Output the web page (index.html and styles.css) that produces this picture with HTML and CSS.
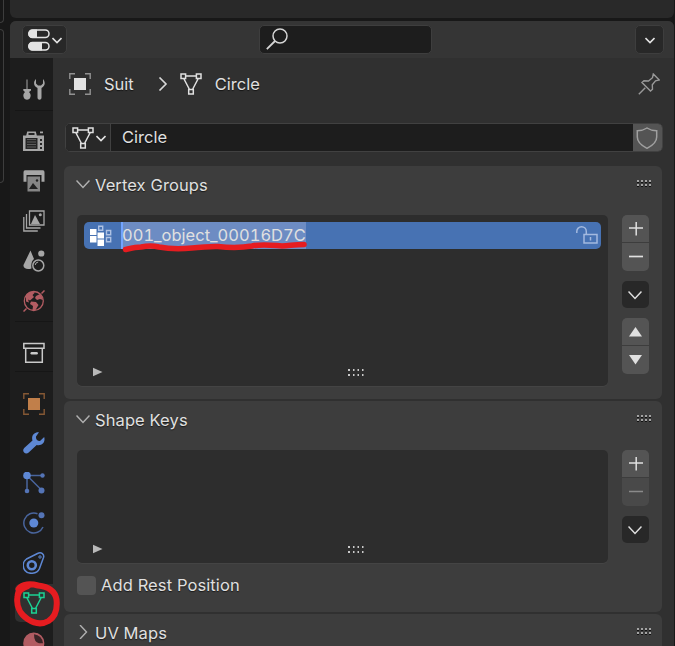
FILE: index.html
```html
<!DOCTYPE html>
<html lang="en">
<head>
<meta charset="utf-8">
<title>Properties</title>
<link rel="stylesheet" href="styles.css">
</head>
<body>
<svg class="defs" width="0" height="0">
  <symbol id="mesh" viewBox="0 0 22 22"><path d="M5.5 3H16.5M4 6l5.5 10.5M18 6l-5.500 10.500M1 1h4.600v4.600H1zM16.400 1H21v4.600h-4.600zM8.700 16.400h4.600V21H8.700z" fill="none" stroke="currentColor" stroke-width="1.500"/></symbol>
  <symbol id="down" viewBox="0 0 14 14"><path d="M.5 3.500L7 10.500l6.500-7" fill="none" stroke="currentColor" stroke-width="1.500"/></symbol>
  <symbol id="small" viewBox="0 0 10 10"><path d="M.5 3L5 7.500 9.500 3" fill="none" stroke="currentColor" stroke-width="1.600"/></symbol>
  <symbol id="plus" viewBox="0 0 14 14"><path d="M0 6h14M7.200 -.5v14" stroke="currentColor" stroke-width="1.500"/></symbol>
  <symbol id="minus" viewBox="0 0 14 14"><path d="M0 6.500h14" stroke="currentColor" stroke-width="1.700"/></symbol>
  <symbol id="play" viewBox="0 0 10 10"><path d="M0 .8l9.500 4.200L0 9.200z" fill="#b9b9b9"/></symbol>
  <symbol id="grip" viewBox="0 0 15 8"><path d="M0 2h2v1H0zM4 2h2v1H4zM8 2h2v1H8zM12 2h2v1h-2zM0 6h2v1H0zM4 6h2v1H4zM8 6h2v1H8zM12 6h2v1h-2z" fill="#111"/><path d="M0 0h2v2H0zM4 0h2v2H4zM8 0h2v2H8zM12 0h2v2h-2zM0 4h2v2H0zM4 4h2v2H4zM8 4h2v2H8zM12 4h2v2h-2z" fill="#a3a3a3"/></symbol>
  <symbol id="resize" viewBox="0 0 16 8"><path d="M0 0h2v2H0zM5 0h1.500v2H5zM9.500 0H11v2H9.500zM14 0h1.500v2H14zM0 5h2v2H0zM5 5h1.500v2H5zM9.500 5H11v2H9.500zM14 5h1.500v2H14z" fill="#c9c9c9"/></symbol>
</svg>
<div class="screen">
  <div class="gutter"><div class="side side-top"></div><div class="side side-low"></div></div>
  <div class="main">
    <div class="upper"></div>
    <div class="editor">
      <header class="header">
        <button class="btn type"><svg width="22" height="22" viewBox="0 0 22 22"><rect x=".8" y="1" width="20.200" height="7.500" rx="3.700" fill="none" stroke="#e3e3e3" stroke-width="1.500"/><path d="M9 .500H4.500a4.200 4.200 0 0 0 0 8.500H9zM14 13H4.500a4.200 4.200 0 0 0 0 8.500H14z" fill="#e3e3e3"/><rect x=".8" y="13.500" width="20.200" height="7.500" rx="3.700" fill="none" stroke="#e3e3e3" stroke-width="1.500"/></svg><svg width="10" height="10"><use href="#small"/></svg></button>
        <div class="search"><svg width="22" height="22" viewBox="0 0 22 22"><circle cx="14" cy="8" r="7" fill="none" stroke="#d5d5d5" stroke-width="1.500"/><path d="M9 13L.8 21.200" stroke="#d5d5d5" stroke-width="1.800"/></svg></div>
        <button class="btn options"><svg width="10" height="10"><use href="#small"/></svg></button>
      </header>
      <div class="body">
        <nav class="tabs">
          <div class="tab tool"><svg width="22" height="22" viewBox="0 0 22 22" fill="#a6a6a6"><path d="M3.500 1.500h1V11h3.500v1.500L6 14c2 2 2 4 1 6-1 2.300-5 2.300-6 0-1-2-1-4 1-6L.3 12.500V11h3.200z"/><path d="M13 1c-3 3-2.500 7 1.500 9v9.500c0 3 4 3 4 0V10c4-2 4-6 1.500-9v4.500l-2 2h-3l-2-2z"/></svg></div>
          <div class="tab render"><svg width="22" height="22" viewBox="0 0 22 22"><path d="M0 5.500h3.200l1-4h8.600l1 4H21V21H0zM17 1.500h3V3.200h-3z" fill="#a6a6a6"/><path d="M5.500 3h6v2h-6zM2.500 8h12v11h-12zM17 9h2v2h-2zM17 13h2v2h-2zM17 17h2v2h-2z" fill="#252525"/><path d="M4 9.500h9M4 12h9M4 14.500h9M4 17h9" stroke="#5c5c5c"/></svg></div>
          <div class="tab"><svg width="22" height="22" viewBox="0 0 22 22"><path d="M2 .3h18q1.500 0 1.500 2v9.500h-3V5H3.500v6.800h-3V2.300Q.5.300 2 .3z" fill="#a6a6a6"/><path d="M4.500 6.500H17V21.500H4.500z" fill="#858585"/><path d="M6 19l4-6 5 6z" fill="#202020"/><circle cx="14" cy="10.500" r="1.200" fill="#202020"/></svg></div>
          <div class="tab"><svg width="22" height="22" viewBox="0 0 22 22" fill="none" stroke="#a6a6a6" stroke-width="1.300"><path d="M6.500 1H21v14H6.500zM3.500 4v14h14M.8 7v14h14"/><path d="M8 14l4-9 5 9z" fill="#a6a6a6" stroke="none"/><circle cx="17.300" cy="4.800" r="1.500" fill="#a6a6a6" stroke="none"/></svg></div>
          <div class="tab"><svg width="22" height="22" viewBox="0 0 22 22" fill="#a6a6a6"><path d="M7.500.500L11 9q-3.500 3-2.500 9.500C4 20 0 18.500.500 15z"/><circle cx="18.300" cy="3.500" r="3.100"/><circle cx="15.300" cy="15.500" r="5.500" fill="none" stroke="#a6a6a6" stroke-width="1.500"/><path d="M12.200 15q.2-2.600 3-3" fill="none" stroke="#a6a6a6"/></svg></div>
          <div class="tab"><svg width="22" height="22" viewBox="0 0 22 22"><circle cx="10.800" cy="11" r="9.500" fill="none" stroke="#b25c62" stroke-width="1.300"/><path d="M.5 21.500l3-3M18.500 3.500l3-3" stroke="#b25c62" stroke-width="1.500"/><path d="M3 5q4-5 9-2.500L9.500 5l1.500 2-4 3.500-2-1 1 3-3-1zM13 6l4-2q3 3 3 6l-3-1-3 1-2-2zM8 11.500l5 .5 2.500 3-3 5H9.500l.5-4-3-2z" fill="#b25c62"/></svg></div>
          <div class="tab collection"><svg width="22" height="22" viewBox="0 0 22 22" fill="none" stroke="#c9c9c9" stroke-width="1.500"><path d="M.8 1.500H21v4.700H.8zM2.700 6v14.300h16.600V6"/><path d="M8.700 11.200h5" stroke-width="2.400" stroke-linecap="round"/></svg></div>
          <div class="tab object"><svg width="22" height="22" viewBox="0 0 22 22"><path d="M.8 6V.8H6M16 .8h5.200V6M.8 16v5.200H6M16 21.200h5.200V16" fill="none" stroke="#855834" stroke-width="1.400"/><path d="M5 5h12v12H5z" fill="#c17f4a"/></svg></div>
          <div class="tab"><svg width="22" height="22" viewBox="0 0 22 22"><path d="M16 .3C11 0 8 4 9.500 8.500L1.200 16c-3 3.200 1.300 7.500 4.500 4.500l8-7.500c5 1.300 9-2.500 7.500-8L17 9q-4.500 0-4-4.500z" fill="#5e88d4"/></svg></div>
          <div class="tab"><svg width="22" height="22" viewBox="0 0 22 22"><path d="M4 3.500h15M4 3.500V19M4 3.500l15 15" fill="none" stroke="#49659d" stroke-width="1.500"/><circle cx="4" cy="3.500" r="3.800" fill="#5e88d4"/><g fill="#5474b6"><circle cx="19.500" cy="3.500" r="2.200"/><circle cx="4" cy="19" r="2.300"/><circle cx="18.500" cy="18.500" r="3"/></g></svg></div>
          <div class="tab"><svg width="22" height="22" viewBox="0 0 22 22"><path d="M14.500 1.700A10 10 0 1 0 20 15" fill="none" stroke="#49659d" stroke-width="1.500"/><circle cx="10.800" cy="11" r="4.500" fill="#5e88d4"/><circle cx="18.500" cy="3.300" r="3" fill="#5474b6"/></svg></div>
          <div class="tab"><svg width="22" height="22" viewBox="0 0 22 22" fill="none" stroke="#5e88d4"><path d="M3.500 7L14.500 1.500c4-2 7 1 6 4L16.500 16.500C14 22.500 5 22.500 2 18.500S0 9.500 3.500 7z" stroke-width="1.500"/><circle cx="8.800" cy="13.200" r="4" stroke-width="2.600"/><circle cx="17" cy="5" r="1.200"/></svg></div>
          <div class="tab active"><svg width="22" height="22"><use href="#mesh"/></svg></div>
          <div class="tab"><svg width="22" height="22" viewBox="0 0 22 22"><circle cx="10.800" cy="11" r="9.900" fill="#b25c62" stroke="#b25c62" stroke-width="1.300"/><path d="M11 2.200q8 1 9 9h-4q-5-1-5-9z" fill="#3a2426"/></svg></div>
        </nav>
        <main class="content">
          <div class="crumbs">
            <svg width="22" height="22" viewBox="0 0 22 22"><path d="M.8 6V.8H6M16 .8h5.200V6M.8 16v5.200H6M16 21.200h5.200V16" fill="none" stroke="#929292" stroke-width="1.400"/><path d="M5 5h12v12H5z" fill="#e3e3e3"/></svg>
            <span class="suit">Suit</span>
            <svg class="arrow" width="10" height="14" viewBox="0 0 10 14"><path d="M1.500.5L8 7l-6.500 6.500" fill="none" stroke="#d8d8d8" stroke-width="1.600"/></svg>
            <svg class="mesh" width="22" height="22"><use href="#mesh"/></svg>
            <span>Circle</span>
            <svg class="pin" width="22" height="22" viewBox="0 0 22 22"><path d="M.8 21.200l6.500-6.500M15.300 1l6 6-3.800.8-3.200 4 .2 4.500L12.500 18 4 9.500 6 7.800l4.500.2 4-3.300z" fill="none" stroke="#999" stroke-width="1.400"/></svg>
          </div>
          <div class="name">
            <div class="pick"><svg width="22" height="22"><use href="#mesh"/></svg><svg width="10" height="10"><use href="#small"/></svg></div>
            <div class="value">Circle</div>
            <div class="shield"><svg width="22" height="22" viewBox="0 0 22 22"><path d="M11 1Q7 3.700 1.300 3.700V10q0 6.500 9.700 11.300 9.700-4.800 9.700-11.300V3.700Q15 3.700 11 1z" fill="none" stroke="#a0a0a0" stroke-width="1.500"/></svg></div>
          </div>
          <section class="panel groups">
            <div class="title"><svg width="14" height="14"><use href="#down"/></svg><h2>Vertex Groups</h2><svg class="grip" width="15" height="8"><use href="#grip"/></svg></div>
            <div class="columns">
              <div class="list">
                <div class="row">
                  <svg width="22" height="22" viewBox="0 0 22 22"><path d="M0 4h6.500v6H0zM0 11h6.500v6.500H0zM7.500 7.500h6.500v6H7.500zM7.500 14.500h6.500V21H7.500z" fill="#fff"/><path d="M8.700 1.200h4v4h-4zM16.500 5.500h4.200v4.300h-4.200zM16.500 12.500h4.200v4.300h-4.200z" fill="none" stroke="#adc1e3" stroke-width="1.400"/></svg>
                  <span class="edit">001_object_00016D7C</span>
                  <svg class="lock" width="22" height="18" viewBox="0 0 22 18"><path d="M.8 7V5.500a4.600 4.600 0 0 1 9.500 0V8M8 8.500h13V17H8zM14.500 11v3.500" fill="none" stroke="#a3b9df" stroke-width="1.500"/></svg>
                </div>
                <div class="foot"><svg width="10" height="10"><use href="#play"/></svg><svg class="resize" width="16" height="8"><use href="#resize"/></svg></div>
              </div>
              <div class="actions">
                <div class="pair"><button><svg width="14" height="14"><use href="#plus"/></svg></button><button><svg width="14" height="14"><use href="#minus"/></svg></button></div>
                <button class="menu"><svg width="14" height="14"><use href="#down"/></svg></button>
                <div class="pair"><button><svg width="14" height="10" viewBox="0 0 14 10"><path d="M6.500 0L13 9.500H0z" fill="#e0e0e0"/></svg></button><button><svg width="14" height="10" viewBox="0 0 14 10"><path d="M6.500 9.500L0 0h13z" fill="#e0e0e0"/></svg></button></div>
              </div>
            </div>
            <svg class="underline" width="190" height="16" viewBox="0 0 190 16"><path d="M7.500 10.500C14 9 18 8 23 8c7-1.500 12-1.500 18 0 12 2.300 22 2 33 1 12-.5 18-2 26-1.500 14 1.500 22 1.500 34-.5 11-2.500 22-.5 30 0 8-.3 12-1.500 22-1.500" fill="none" stroke="#e61c20" stroke-width="5.500" stroke-linecap="round"/></svg>
          </section>
          <section class="panel keys">
            <div class="title"><svg width="14" height="14"><use href="#down"/></svg><h2>Shape Keys</h2><svg class="grip" width="15" height="8"><use href="#grip"/></svg></div>
            <div class="columns">
              <div class="list"><div class="foot"><svg width="10" height="10"><use href="#play"/></svg><svg class="resize" width="16" height="8"><use href="#resize"/></svg></div></div>
              <div class="actions">
                <div class="pair"><button><svg width="14" height="14"><use href="#plus"/></svg></button><button class="off"><svg width="14" height="14"><use href="#minus"/></svg></button></div>
                <button class="menu"><svg width="14" height="14"><use href="#down"/></svg></button>
              </div>
            </div>
            <label class="check"><span class="box"></span><span>Add Rest Position</span></label>
          </section>
          <section class="panel uv">
            <div class="title"><svg width="14" height="14" viewBox="0 0 14 14"><path d="M4 0l6.500 7L4 14" fill="none" stroke="currentColor" stroke-width="1.400"/></svg><h2>UV Maps</h2><svg class="grip" width="15" height="8"><use href="#grip"/></svg></div>
          </section>
        </main>
      </div>
    </div>
  </div>
  <svg class="ring" width="48" height="48" viewBox="0 0 48 48"><path d="M4.500 9C8 3.500 17 3.500 24 5.500c9 1 17 5 18.500 14 1 9-1 17-8 21.500-7 4-15 2-21-2C6 34 2 26 3.500 17 3.500 12 7 8 14 6" fill="none" stroke="#e61c20" stroke-width="6" stroke-linecap="round" stroke-linejoin="round"/></svg>
</div>
</body>
</html>
```

FILE: styles.css
```css
* { box-sizing: border-box; }
body { margin: 0; background: #181818; color: #e0e0e0; font: 16.5px/20px Inter, sans-serif; text-shadow: 0 1px 1px #0009; }
svg { display: block; flex: none; }
.defs { position: absolute; }
button { margin: 0; padding: 0; border: 0; color: inherit; }
h2 { margin: 0; font-size: inherit; font-weight: 400; letter-spacing: .1px; }
.screen { position: relative; display: flex; width: 675px; height: 646px; overflow: hidden; }
.gutter { width: 10px; flex: none; }
.side { width: 4px; border: 1px solid #3d3d3d; border-left: 0; }
.side-top { height: 23px; border-top: 0; border-radius: 0 0 5px 0; }
.side-low { height: 154px; margin-top: 6px; border-radius: 0 5px 5px 0; }
.main { width: 664px; }
.upper { height: 18px; background: #292929; border-radius: 0 0 6px 6px; }
.editor { height: 625px; margin-top: 3px; background: #303030; border-radius: 6px 6px 0 0; overflow: hidden; }
.header { display: flex; height: 37px; padding: 4px 10px 0 12px; background: #353535; }
.btn, .search { display: flex; align-items: center; height: 29px; border: 1px solid #3e3e3e; border-radius: 5px; background: #282828; }
.type { width: 45px; padding-left: 5px; gap: 2px; }
.search { width: 173px; margin-left: 192px; padding: 0 0 1px 6px; background: #1d1d1d; }
.options { width: 29px; margin-left: auto; justify-content: center; }
.btn svg:last-child { margin-top: 1px; }
.body { display: flex; height: 588px; }
.tabs { width: 43px; flex: none; padding: 10px 0 0 5px; background: #1d1d1d; }
.tab { display: flex; align-items: center; height: 40px; padding-left: 8px; }
.tool { height: 43px; padding-bottom: 1px; border-bottom: 1px solid #161616; }
.render { height: 50px; padding-top: 9px; }
.collection { height: 51px; border-top: 1px solid #161616; border-bottom: 1px solid #161616; padding-top: 13px; }
.collection svg { margin-top: -1px; }
.object { height: 51px; padding-top: 12px; }
.active { height: 38px; margin: 1px 0; background: #303030; border-radius: 5px 0 0 5px; color: #1bd193; }
.content { width: 598px; margin-left: 11px; }
.crumbs { display: flex; align-items: center; height: 52px; padding-left: 5px; }
.suit { margin-left: 13px; }
.arrow { margin-left: 24px; }
.mesh { margin: 0 13px 0 12px; }
.pin { margin-left: auto; margin-right: 2px; }
.name { display: flex; width: 598px; height: 29px; margin: 13px 0 0 1px; border: 1px solid #414141; border-radius: 5px; background: #1d1d1d; overflow: hidden; }
.pick { display: flex; align-items: center; width: 45px; padding: 1px 0 0 6px; gap: 2px; background: #282828; border-right: 1px solid #414141; }
.value { flex: 1; padding: 3px 11px; }
.shield { display: flex; align-items: center; width: 29px; padding: 0 0 0 3px; background: #545454; }
.panel { position: relative; padding-left: 13px; background: #3d3d3d; border-radius: 6px; margin-bottom: 2px; }
.groups { height: 233px; margin-top: 14px; }
.keys { height: 211px; }
.uv { height: 60px; }
.title { display: flex; align-items: center; height: 38px; padding-right: 10px; color: #e0e0e0; }
.title > svg:first-child { margin: -3px 5px 0 -1px; color: #b0b0b0; }
.title .grip { margin: -3px 0 0 auto; }
.columns { display: flex; gap: 14px; margin-top: 11px; }
.list { display: flex; flex-direction: column; width: 531px; height: 171px; padding: 7px; border-radius: 5px; background: #2d2d2d; box-shadow: 0 1px #444; }
.keys .list { height: 113px; }
.row { display: flex; align-items: center; height: 27px; padding: 0 3px 0 6px; background: #4772b3; border-radius: 5px; text-shadow: none; }
.edit { height: 27px; margin-left: 9px; padding: 3px 0 0; line-height: 20px; background: #6d8cc3; border-left: 2px solid #72a4ff; margin-right: auto; font-variant-numeric: tabular-nums; text-indent: -1px; }
.lock { margin-top: -1px; }
.foot { display: flex; align-items: center; height: 10px; margin: auto 0 2px 9px; }
.resize { margin-left: 245px; margin-top: 2px; }
.actions { display: flex; flex-direction: column; gap: 10px; width: 27px; }
.pair { display: flex; flex-direction: column; gap: 1px; border-radius: 5px; overflow: hidden; background: #3d3d3d; }
.actions button { display: flex; align-items: center; justify-content: center; height: 27px; background: #545454; }
.pair button:last-child { height: 28px; }
.actions .menu { border-radius: 5px; background: #282828; padding-right: 2px; }
.actions .off { background: #494949; color: #8a8a8a; }
.check { display: flex; align-items: center; gap: 5px; margin-top: 12px; letter-spacing: .1px; }
.box { width: 19px; height: 19px; background: #545454; border-radius: 4px; }
.underline { position: absolute; left: 54px; top: 73px; }
.ring { position: absolute; left: 14px; top: 580px; }
```
